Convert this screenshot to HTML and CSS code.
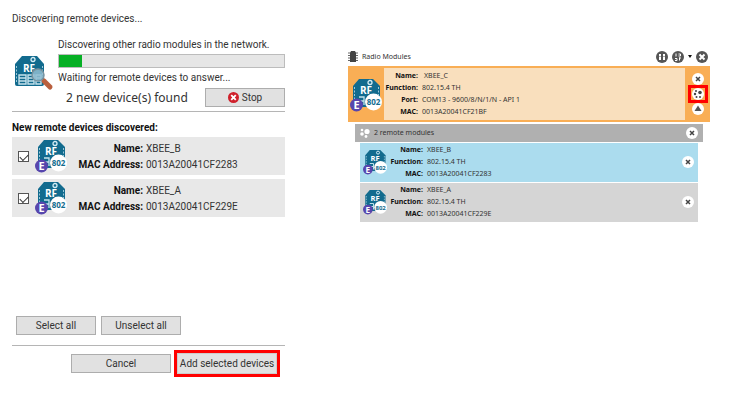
FILE: index.html
```html
<!DOCTYPE html>
<html lang="en">
<head>
<meta charset="utf-8">
<title>Radio Modules</title>
<link rel="stylesheet" href="styles.css">
</head>
<body>
<svg class="defs" aria-hidden="true">
  <symbol id="board" viewBox="0 0 32 32">
    <path d="M1 9 8 1h15l7 8v20q0 2-2 2H3q-2 0-2-2z" fill="#126b8e"/>
    <circle cx="19" cy="4.500" r="2" fill="none" stroke="#d5edf5" stroke-width="1.300"/>
    <path d="M2.500 11v17M28.500 11v17" stroke="#9dc9da" stroke-dasharray="2 1.500"/>
    <path d="M5 20h7v9H5zM14 20h6v9h-6zM22 20h5v9h-5zM5 23h7m2 0h6m2 0h5M5 26h7m2 0h6m2 0h5" fill="none" stroke="#c5e2ec" stroke-width="1.400"/>
    <text x="15" y="17" class="rf">RF</text>
  </symbol>
  <symbol id="module" viewBox="0 0 32 34">
    <path d="M3 8 9 1h14l7 7v19q0 2-2 2H5q-2 0-2-2z" fill="#126b8e"/>
    <circle cx="20" cy="4.500" r="2" fill="none" stroke="#d5edf5" stroke-width="1.300"/>
    <path d="M4.500 9v16M28.500 9v8" stroke="#9dc9da" stroke-dasharray="2 1.500"/>
    <path d="M9 19h5v8M8 23h6" fill="none" stroke="#c5e2ec" stroke-width="1.300"/>
    <text x="16" y="16" class="rf">RF</text>
    <circle cx="23.500" cy="24" r="8.500" fill="#fff"/>
    <text x="23.500" y="27" class="num">802</text>
    <circle cx="6.500" cy="27" r="6.500" fill="#5746ad"/>
    <text x="6.500" y="31" class="e">E</text>
  </symbol>
  <symbol id="close" viewBox="0 0 12 12">
    <circle cx="6" cy="6" r="6" fill="#fff"/>
    <path d="m4 4 4 4m0-4-4 4" stroke="#444" stroke-width="1.500"/>
  </symbol>
</svg>

<main class="page">
  <section class="dialog">
    <p class="line title">Discovering remote devices...</p>
    <div class="search">
      <svg class="search-icon" viewBox="0 0 40 36" aria-hidden="true">
        <use href="#board" x="0" y="0" width="32" height="32"/>
        <path d="m30 26 6 6" stroke="#b95f3d" stroke-width="5" stroke-linecap="round"/>
        <circle cx="24" cy="20" r="6" fill="#91bdd1" fill-opacity=".85" stroke="#7893a0" stroke-width="1.500"/>
      </svg>
      <div class="status">
        <p class="line">Discovering other radio modules in the network.</p>
        <div class="bar" role="progressbar" aria-label="Discovery" aria-valuenow="10"><div class="fill" style="width:10%"></div></div>
        <p class="line">Waiting for remote devices to answer...</p>
        <div class="found">
          <p class="count">2 new device(s) found</p>
          <button class="btn stop" type="button"><svg class="stop-icon" viewBox="0 0 12 12" aria-hidden="true"><circle cx="6" cy="6" r="6" fill="#cf202b"/><path d="m3.500 3.500 5 5m0-5-5 5" stroke="#fff" stroke-width="2"/></svg>Stop</button>
        </div>
      </div>
    </div>
    <h2 class="heading">New remote devices discovered:</h2>
    <div class="device">
      <input class="check" type="checkbox" aria-label="XBEE_B" checked>
      <svg class="device-icon" aria-hidden="true"><use href="#module"/></svg>
      <dl class="info"><dt>Name:</dt><dd>XBEE_B</dd><dt>MAC Address:</dt><dd>0013A20041CF2283</dd></dl>
    </div>
    <div class="device">
      <input class="check" type="checkbox" aria-label="XBEE_A" checked>
      <svg class="device-icon" aria-hidden="true"><use href="#module"/></svg>
      <dl class="info"><dt>Name:</dt><dd>XBEE_A</dd><dt>MAC Address:</dt><dd>0013A20041CF229E</dd></dl>
    </div>
    <div class="select-row">
      <button class="btn" type="button">Select all</button>
      <button class="btn" type="button">Unselect all</button>
    </div>
    <div class="actions">
      <button class="btn cancel" type="button">Cancel</button>
      <div class="mark"><button class="btn add" type="button">Add selected devices</button></div>
    </div>
  </section>

  <section class="modules">
    <header class="modules-head">
      <svg class="chip" viewBox="0 0 10 11" aria-hidden="true"><path d="M0 2h10M0 4.500h10M0 7h10M0 9.500h10" stroke="#666"/><path d="M2 2 3 0h4l1 2v9H2z" fill="#444"/></svg>
      <h2 class="modules-title">Radio Modules</h2>
      <button class="icon-btn" type="button" aria-label="Discover modules"><svg class="tool" viewBox="0 0 12 12"><circle cx="6" cy="6" r="6" fill="#555"/><path d="M3 3h2v2.500H3zM7 3h2v2.500H7zM3 6h2v3H3zM7 6h2v3H7z" fill="#fff"/></svg></button>
      <button class="icon-btn" type="button" aria-label="Sort modules"><svg class="tool" viewBox="0 0 12 12"><circle cx="6" cy="6" r="6" fill="#555"/><path d="M4 2.500v3M3 7.500h2v2H3M6.500 3h2v2h-2M7.500 6.500v3M7 7h2" fill="none" stroke="#fff"/></svg></button>
      <svg class="caret" viewBox="0 0 4 3" aria-hidden="true"><path d="M0 0h4L2 3z" fill="#111"/></svg>
      <button class="icon-btn" type="button" aria-label="Close all"><svg class="tool" viewBox="0 0 12 12"><circle cx="6" cy="6" r="6" fill="#555"/><path d="m3.500 3.500 5 5m0-5-5 5" stroke="#fff" stroke-width="2"/></svg></button>
    </header>
    <article class="local">
      <div class="local-icon"><svg class="device-icon" aria-hidden="true"><use href="#module"/></svg></div>
      <dl class="info small local-info"><dt>Name:</dt><dd class="name">XBEE_C</dd><dt>Function:</dt><dd>802.15.4 TH</dd><dt>Port:</dt><dd>COM13 - 9600/8/N/1/N - API 1</dd><dt>MAC:</dt><dd>0013A20041CF21BF</dd></dl>
      <div class="tools">
        <button class="icon-btn" type="button" aria-label="Remove XBEE_C"><svg class="round"><use href="#close"/></svg></button>
        <div class="mark tool-mark"><button class="icon-btn" type="button" aria-label="Discover remote devices"><svg class="round" viewBox="0 0 12 12"><circle cx="6" cy="6" r="6" fill="#fff"/><g fill="#444"><circle cx="8" cy="4.500" r="1.800"/><circle cx="4" cy="3" r="1"/><circle cx="3" cy="6" r="1.200"/><circle cx="4.500" cy="9" r="1"/><circle cx="8" cy="9" r="1"/></g></svg></button></div>
        <button class="icon-btn" type="button" aria-label="Collapse"><svg class="round" viewBox="0 0 12 12"><circle cx="6" cy="6" r="6" fill="#fff"/><path d="m6 2.500 3.500 5.500h-7z" fill="#555"/></svg></button>
      </div>
    </article>
    <div class="remote-head">
      <svg class="net" viewBox="0 0 10 10" aria-hidden="true"><g fill="#fff"><circle cx="7" cy="3.500" r="2.600"/><circle cx="2" cy="2" r="1.300"/><circle cx="2" cy="6" r="1.800"/><circle cx="6" cy="8.500" r="1.400"/></g></svg>
      <h3 class="remote-title">2 remote modules</h3>
      <button class="icon-btn" type="button" aria-label="Remove all"><svg class="round"><use href="#close"/></svg></button>
    </div>
    <article class="remote current">
      <svg class="remote-icon" aria-hidden="true"><use href="#module"/></svg>
      <dl class="info small"><dt>Name:</dt><dd>XBEE_B</dd><dt>Function:</dt><dd>802.15.4 TH</dd><dt>MAC:</dt><dd>0013A20041CF2283</dd></dl>
      <button class="icon-btn" type="button" aria-label="Remove XBEE_B"><svg class="round"><use href="#close"/></svg></button>
    </article>
    <article class="remote">
      <svg class="remote-icon" aria-hidden="true"><use href="#module"/></svg>
      <dl class="info small"><dt>Name:</dt><dd>XBEE_A</dd><dt>Function:</dt><dd>802.15.4 TH</dd><dt>MAC:</dt><dd>0013A20041CF229E</dd></dl>
      <button class="icon-btn" type="button" aria-label="Remove XBEE_A"><svg class="round"><use href="#close"/></svg></button>
    </article>
  </section>
</main>
</body>
</html>
```
FILE: styles.css
```css
* { box-sizing: border-box; margin: 0; padding: 0; }
body {
  background: #fff;
  color: #333;
  font: 10px/16px Roboto, "Open Sans", sans-serif;
}
svg { display: block; flex: none; }
.defs { position: absolute; width: 0; height: 0; }
.rf { fill: #fff; font: bold 10px "Open Sans", sans-serif; text-anchor: middle; }
.num { fill: #126b8e; font: bold 8px "Open Sans", sans-serif; text-anchor: middle; }
.e { fill: #fff; font: bold 11px "Open Sans", sans-serif; text-anchor: middle; }

.page {
  display: grid;
  grid-template-columns: 273fr 362fr;
  column-gap: 63px;
  align-items: start;
  padding: 11px 19px 0 12px;
}
.line { white-space: nowrap; }

.search {
  display: flex;
  gap: 4px;
  padding: 10px 0 4px 2px;
  border-bottom: 1px solid #b5b5b5;
}
.search-icon { width: 40px; height: 36px; margin-top: 18px; }
.status { flex: 1; min-width: 0; }
.bar { height: 14px; margin: 1px 0 2px; border: 1px solid #bcbcbc; background: #e6e6e6; }
.fill { height: 100%; background: #06b025; }
.found { display: flex; align-items: center; justify-content: space-between; padding-left: 8px; margin-top: 2px; }
.count { font-family: "Noto Sans", "Open Sans", sans-serif; font-size: 12px; white-space: nowrap; }
.btn {
  height: 19px;
  width: 80px;
  border: 1px solid #adadad;
  background: #e1e1e1;
  color: #333;
  font: inherit;
  line-height: 16px;
  white-space: nowrap;
}
.stop { display: flex; align-items: center; justify-content: center; gap: 3px; }
.stop-icon { width: 11px; height: 11px; }

.heading { margin: 8px 0 1px; font-size: 10px; line-height: 16px; color: #111; white-space: nowrap; }
.device {
  display: flex;
  align-items: center;
  height: 38px;
  margin-bottom: 4px;
  padding-left: 6px;
  background: #e8e8e8;
}
.check {
  appearance: none;
  display: grid;
  place-items: center;
  width: 11px;
  height: 11px;
  border: 1px solid #555;
  background: #fff;
}
.check:checked::after {
  content: "";
  width: 7px;
  height: 4px;
  border: solid #333;
  border-width: 0 0 1px 1px;
  transform: rotate(-45deg);
}
.device-icon { width: 32px; height: 34px; }
.device .device-icon { margin-left: 6px; }
.info { display: grid; grid-template-columns: 68px auto; column-gap: 3px; line-height: 16px; white-space: nowrap; }
.device .info { margin-left: 8px; padding-top: 2px; }
.info dt { font-weight: bold; text-align: right; color: #111; }
.name { padding-left: 2px; }

.select-row { display: flex; gap: 5px; margin-top: 99px; padding: 0 4px 10px; border-bottom: 1px solid #b5b5b5; }
.actions { display: flex; align-items: center; justify-content: flex-end; gap: 3px; margin-top: 4px; margin-right: 5px; }
.cancel { width: 100px; }
.mark { border: 3px solid #f00; }
.add { display: block; width: 100px; height: 21px; border-color: #ccc; }

.modules { padding-top: 38px; }
.modules-head { display: flex; align-items: center; gap: 4px; height: 17px; padding: 0 2px 2px 0; }
.chip { width: 10px; height: 11px; }
.modules-title, .remote-title { flex: 1; font: 7px/16px "Noto Sans", "Open Sans", sans-serif; }
.icon-btn { display: block; border: 0; background: none; }
.tool { width: 12px; height: 12px; }
.caret { width: 4px; height: 3px; }
.round { width: 12px; height: 12px; }
.local {
  display: flex;
  border: solid #f9ae55;
  border-width: 2px 0;
  background: #f9ae55;
}
.local-icon { width: 36px; padding: 10px 2px 0; }
.local-info { flex: 1; background: #f9dfbd; padding: 2px 0; }
.info.small { grid-template-columns: 34px auto; column-gap: 4px; font: 7px/12px "Noto Sans", "Open Sans", sans-serif; }
.tools { display: flex; flex-direction: column; align-items: center; justify-content: center; width: 25px; }
.tool-mark { padding: 0 1px; }
.remote-head { display: flex; align-items: center; height: 18px; margin: 2px 7px 1px; padding: 0 5px; background: #b0b0b0; }
.net { width: 10px; height: 10px; }
.remote-title { margin-left: 4px; }
.remote { display: flex; align-items: center; margin: 0 12px 1px; padding: 1px 4px 2px 3px; background: #d5d5d5; }
.current { background: #abdcee; }
.remote-icon { width: 24px; height: 26px; }
.remote .info { flex: 1; margin-left: 2px; }
```
